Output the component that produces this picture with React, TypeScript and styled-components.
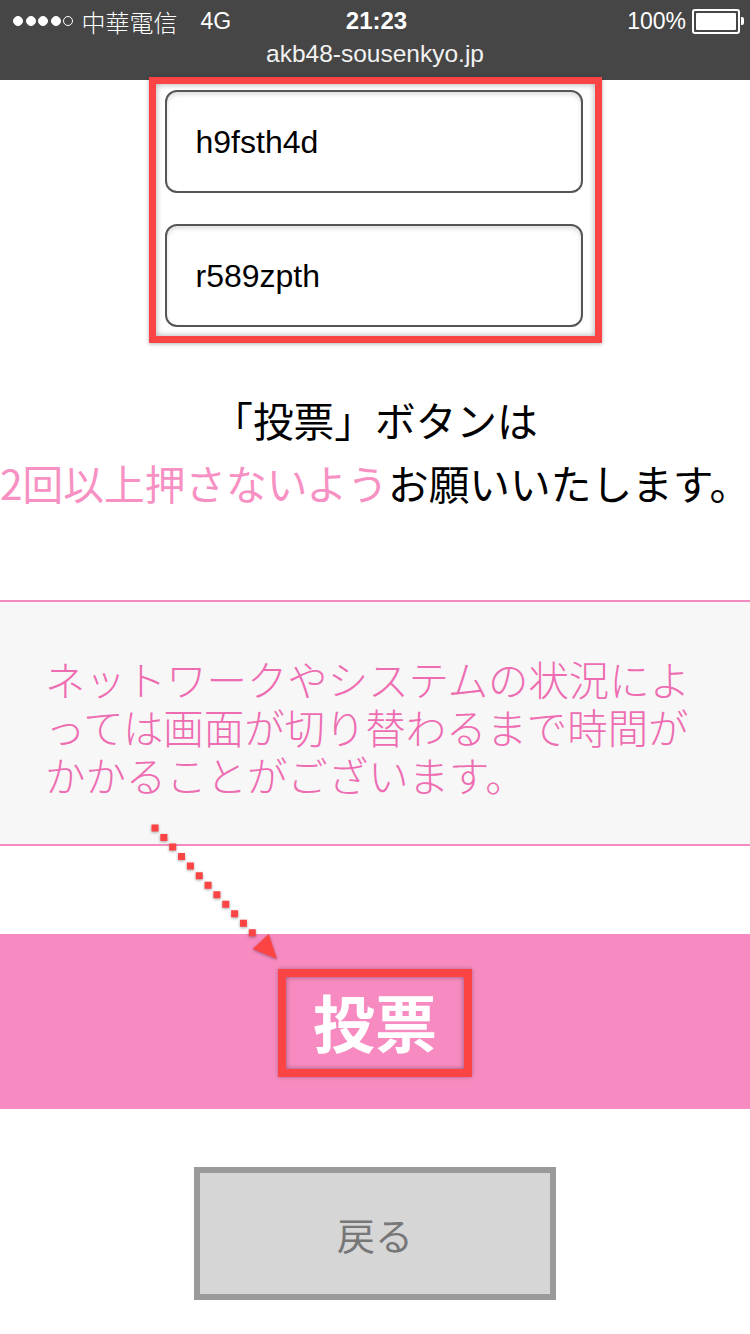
import styled, { createGlobalStyle } from 'styled-components'

const GlobalStyle = createGlobalStyle`
  html, body {
    margin: 0;
    padding: 0;
    background: #ffffff;
  }
  body {
    font-family: "Liberation Sans", "Noto Sans CJK JP", sans-serif;
  }
`

const RED = '#fd4444'
const PINK = '#f78bc1'

const Page = styled.div`
  position: relative;
  width: 750px;
  height: 1334px;
  overflow: hidden;
  background: #ffffff;
  display: flex;
  flex-direction: column;
  align-items: center;
`

/* ---- status bar ---- */
const StatusBar = styled.header`
  align-self: stretch;
  height: 80px;
  background: #464646;
  color: #ffffff;
  display: flex;
  flex-direction: column;
`
const StatusRow = styled.div`
  height: 42px;
  display: grid;
  grid-template-columns: 1fr auto 1fr;
  align-items: center;
  padding: 0 10px 0 13px;
  font-size: 23px;
`
const Carrier = styled.div`
  display: flex;
  align-items: center;
  font-family: "Liberation Sans", "Noto Sans CJK TC", sans-serif;
  font-weight: 300;
`
const Dot = styled.span<{ $empty?: boolean }>`
  width: 10px;
  height: 10px;
  margin-right: 2.5px;
  border-radius: 50%;
  box-sizing: border-box;
  background: ${p => (p.$empty ? 'transparent' : '#ffffff')};
  border: 1.5px solid #ffffff;
`
const CarrierName = styled.span`
  margin-left: 6px;
  font-size: 24px;
`
const Network = styled.span`
  margin-left: 23px;
`
const Clock = styled.div`
  font-weight: 700;
  font-size: 24px;
`
const Battery = styled.div`
  justify-self: end;
  display: flex;
  align-items: center;
  gap: 6px;
`
const BatteryBody = styled.span`
  width: 40px;
  height: 17px;
  border: 2px solid #ffffff;
  border-radius: 3px;
  padding: 2px;
  box-sizing: content-box;
  display: flex;
  position: relative;
  &::before {
    content: '';
    flex: 1;
    background: #ffffff;
    border-radius: 1px;
  }
  &::after {
    content: '';
    position: absolute;
    right: -6px;
    top: 6px;
    width: 3px;
    height: 8px;
    background: #ffffff;
    border-radius: 0 2px 2px 0;
  }
`
const UrlRow = styled.div`
  flex: 1;
  display: flex;
  align-items: flex-start;
  justify-content: center;
  margin-top: -2px;
  font-size: 24.5px;
  color: #f2f2f2;
`

/* ---- code inputs ---- */
const CodeFrame = styled.div`
  margin-top: -3px;
  width: 453px;
  box-sizing: border-box;
  border: 7px solid ${RED};
  padding: 6px 12px 9px 9px;
  display: flex;
  flex-direction: column;
  gap: 31px;
  background: #ffffff;
  box-shadow: inset 0 0 6px rgba(0, 0, 0, 0.35), 0 1px 4px rgba(0, 0, 0, 0.3);
  position: relative;
`
const CodeInput = styled.input`
  display: block;
  width: 100%;
  height: 103px;
  box-sizing: border-box;
  border: 2px solid #555555;
  border-radius: 12px;
  padding: 2px 29px 0;
  font-family: "Liberation Sans", Arial, sans-serif;
  font-size: 32px;
  color: #000000;
  background: #ffffff;
  box-shadow: inset 0 3px 4px rgba(0, 0, 0, 0.12);
  outline: none;
`

/* ---- caution text ---- */
const Caution = styled.div`
  margin-top: 45px;
  width: 750px;
  font-family: "Noto Sans CJK JP", sans-serif;
  font-size: 40.7px;
  line-height: 63px;
  text-align: center;
  color: #000000;
  white-space: nowrap;
`
const Pink = styled.span`
  color: #f790c3;
`

const Notice = styled.div`
  margin-top: 86px;
  align-self: stretch;
  background: #f7f7f7;
  border-top: 2px solid #f48bc0;
  border-bottom: 2px solid #f48bc0;
  padding: 53px 42px 45px 45px;
  font-family: "Noto Sans CJK JP", sans-serif;
  font-weight: 300;
  font-size: 40.4px;
  line-height: 48px;
  color: #ee6cb1;
`

/* ---- vote ---- */
const VoteBand = styled.div`
  margin-top: 88px;
  align-self: stretch;
  height: 175px;
  box-sizing: border-box;
  padding-top: 35px;
  background: ${PINK};
  display: flex;
  justify-content: center;
  align-items: flex-start;
`
const VoteButton = styled.button`
  width: 194px;
  height: 108px;
  box-sizing: border-box;
  border: 8px solid ${RED};
  background: ${PINK};
  box-shadow: inset 0 0 5px rgba(0, 0, 0, 0.4), 0 0 4px rgba(0, 0, 0, 0.3);
  padding: 0 0 4px;
  font-family: "Noto Sans CJK JP", sans-serif;
  font-weight: 700;
  font-size: 62px;
  color: #ffffff;
  display: flex;
  align-items: center;
  justify-content: center;
  cursor: pointer;
`
const BackButton = styled.button`
  margin-top: 58px;
  width: 362px;
  height: 133px;
  box-sizing: border-box;
  border: 6px solid #9a9a9a;
  background: #d6d6d6;
  font-family: "Noto Sans CJK JP", sans-serif;
  font-size: 38px;
  color: #777777;
  cursor: pointer;
`

/* dotted pointer lying over the page */
const Pointer = styled.svg`
  position: absolute;
  left: 0;
  top: 0;
  pointer-events: none;
  filter: drop-shadow(0 1px 1.5px rgba(0, 0, 0, 0.35));
`

export default function App() {
  return (
    <Page>
      <GlobalStyle />
      <StatusBar>
        <StatusRow>
          <Carrier>
            <Dot />
            <Dot />
            <Dot />
            <Dot />
            <Dot $empty />
            <CarrierName>中華電信</CarrierName>
            <Network>4G</Network>
          </Carrier>
          <Clock>21:23</Clock>
          <Battery>
            <span>100%</span>
            <BatteryBody />
          </Battery>
        </StatusRow>
        <UrlRow>akb48-sousenkyo.jp</UrlRow>
      </StatusBar>

      <CodeFrame>
        <CodeInput readOnly defaultValue="h9fsth4d" />
        <CodeInput readOnly defaultValue="r589zpth" />
      </CodeFrame>

      <Caution>
        「投票」ボタンは
        <br />
        <Pink>2回以上押さないよう</Pink>お願いいたします。
      </Caution>

      <Notice>
        ネットワークやシステムの状況によっては画面が切り替わるまで時間がかかることがございます。
      </Notice>

      <VoteBand>
        <VoteButton>投票</VoteButton>
      </VoteBand>

      <BackButton>戻る</BackButton>

      <Pointer width="750" height="1334" viewBox="0 0 750 1334">
        <line
          x1="155"
          y1="828"
          x2="259"
          y2="940"
          stroke={RED}
          strokeWidth="7"
          strokeLinecap="square"
          strokeDasharray="0 13"
        />
        <polygon points="277,959 268.8,933.9 252.6,948.9" fill={RED} />
      </Pointer>
    </Page>
  )
}
